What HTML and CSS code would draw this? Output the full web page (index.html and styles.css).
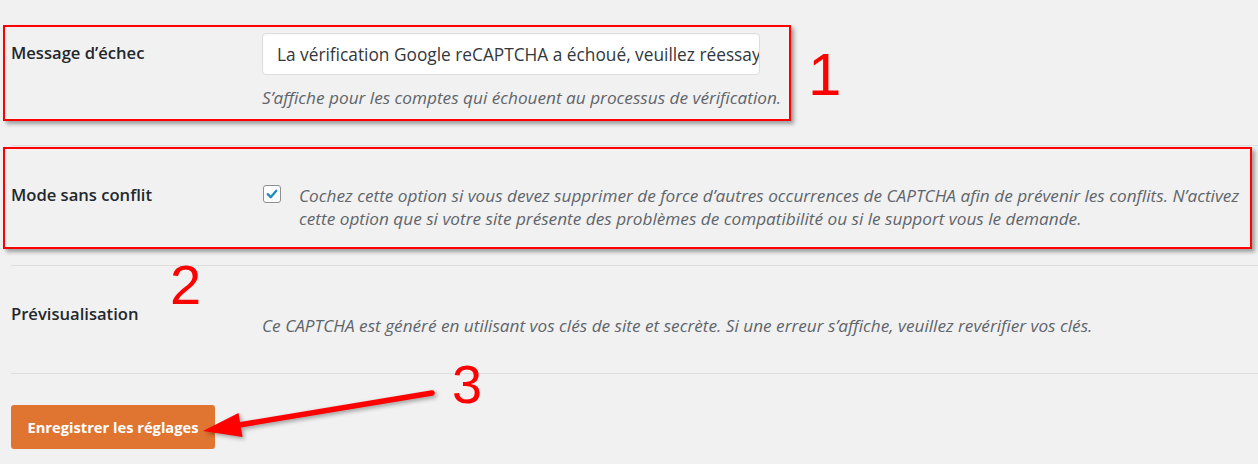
FILE: index.html
```html
<!DOCTYPE html>
<html lang="fr">
<head>
<meta charset="utf-8">
<title>Réglages CAPTCHA</title>
<link rel="stylesheet" href="styles.css">
</head>
<body>
<div class="page">
  <div class="form-table">
    <div class="row row-first">
      <div class="th"><label class="label" for="fail-msg">Message d’échec</label></div>
      <div class="td td-first">
        <input id="fail-msg" class="input" type="text" value="La vérification Google reCAPTCHA a échoué, veuillez réessayer">
        <p class="desc desc-under">S’affiche pour les comptes qui échouent au processus de vérification.</p>
      </div>
    </div>
    <div class="row row-second">
      <div class="th"><label class="label">Mode sans conflit</label></div>
      <div class="td td-check">
        <span class="checkbox">
          <svg viewBox="0 0 18 18" width="18" height="18"><path d="M4.2 9.2 L7.6 12.6 L13.8 5.4" fill="none" stroke="#1e8cbe" stroke-width="2.6" stroke-linecap="round" stroke-linejoin="round"/></svg>
        </span>
        <p class="desc">Cochez cette option si vous devez supprimer de force d’autres occurrences de CAPTCHA afin de prévenir les conflits. N’activez<br>cette option que si votre site présente des problèmes de compatibilité ou si le support vous le demande.</p>
      </div>
    </div>
    <div class="row row-third">
      <div class="th"><label class="label">Prévisualisation</label></div>
      <div class="td td-preview">
        <p class="desc">Ce CAPTCHA est généré en utilisant vos clés de site et secrète. Si une erreur s’affiche, veuillez revérifier vos clés.</p>
      </div>
    </div>
  </div>
  <div class="submit">
    <button class="button-primary" type="button">Enregistrer les réglages</button>
  </div>

  <div class="mark mark-1"></div>
  <div class="mark mark-2"></div>
  <span class="num num-1">1</span>
  <span class="num num-2">2</span>
  <span class="num num-3">3</span>
  <svg class="arrow" width="1258" height="464" viewBox="0 0 1258 464">
    <line x1="432" y1="393" x2="236" y2="425.5" stroke="#ff0000" stroke-width="5.5" stroke-linecap="round"/>
    <polygon points="203,431 238.5,413 242.5,437" fill="#ff0000"/>
  </svg>
</div>
</body>
</html>
```
FILE: styles.css
```css
* { box-sizing: border-box; }
html, body { margin: 0; padding: 0; }
body {
  background: #f1f1f1;
  font-family: "Open Sans", "Noto Sans", sans-serif;
  color: #23282d;
  width: 1258px;
  height: 464px;
  overflow: hidden;
}
.page {
  position: relative;
  width: 1258px;
  height: 464px;
  padding-left: 11px;
}
.row {
  display: grid;
  grid-template-columns: 251px 1fr;
}
.row + .row { border-top: 1px solid #dedede; }
.label {
  display: block;
  font-weight: 600;
  font-size: 16.6px;
  line-height: 24px;
  color: #23282d;
}
.desc {
  margin: 0;
  font-style: italic;
  font-size: 17.2px;
  line-height: 23px;
  color: #60656b;
}
.row-first { height: 145px; }
.row-first .th { padding-top: 41px; }
.td-first { padding-top: 33px; }
.input {
  display: block;
  width: 498px;
  height: 42px;
  margin: 0;
  background: #fff;
  border: 1px solid #dddddd;
  border-radius: 4px;
  box-shadow: inset 0 1px 2px rgba(0,0,0,0.04);
  padding: 0 0 0 14px;
  font-family: "Open Sans", "Noto Sans", sans-serif;
  font-size: 17.3px;
  line-height: 40px;
  color: #32373c;
  outline: none;
}
.desc-under { margin-top: 11px; }
.row-second { height: 120px; }
.row-second .th { padding-top: 37px; }
.td-check {
  padding-top: 38px;
  display: flex;
  align-items: flex-start;
  gap: 18px;
}
.checkbox {
  flex: none;
  width: 18px;
  height: 18px;
  margin-top: 1px;
  margin-left: 1px;
  background: #fff;
  border: 1px solid #8c8f94;
  border-radius: 3px;
  display: flex;
  align-items: center;
  justify-content: center;
}
.checkbox svg { display: block; }
.row-third { height: 108px; }
.row-third .th { padding-top: 36px; }
.td-preview { padding-top: 48px; }
.submit {
  border-top: 1px solid #dedede;
  padding-top: 31px;
}
.button-primary {
  width: 204px;
  height: 44px;
  background: #e07532;
  border: none;
  border-radius: 3px;
  color: #fff;
  font-family: "Open Sans", "Noto Sans", sans-serif;
  font-weight: 700;
  font-size: 14.7px;
  padding: 0;
  cursor: pointer;
}
.mark {
  position: absolute;
  border: 2px solid #ff0000;
  box-shadow: 3px 3px 4px rgba(0,0,0,0.35);
}
.mark-1 { left: 3px; top: 25px; width: 788px; height: 96px; }
.mark-2 { left: 3px; top: 147px; width: 1249px; height: 102px; }
.num {
  position: absolute;
  font-family: "Liberation Sans", Arial, sans-serif;
  color: #ff0000;
  line-height: 1;
}
.num-1 { left: 808px; top: 45px; font-size: 60px; }
.num-2 { left: 170px; top: 257px; font-size: 56px; }
.num-3 { left: 452px; top: 357px; font-size: 54px; }
.arrow {
  position: absolute;
  left: 0;
  top: 0;
  pointer-events: none;
  filter: drop-shadow(2px 2px 2px rgba(0,0,0,0.35));
}
```
